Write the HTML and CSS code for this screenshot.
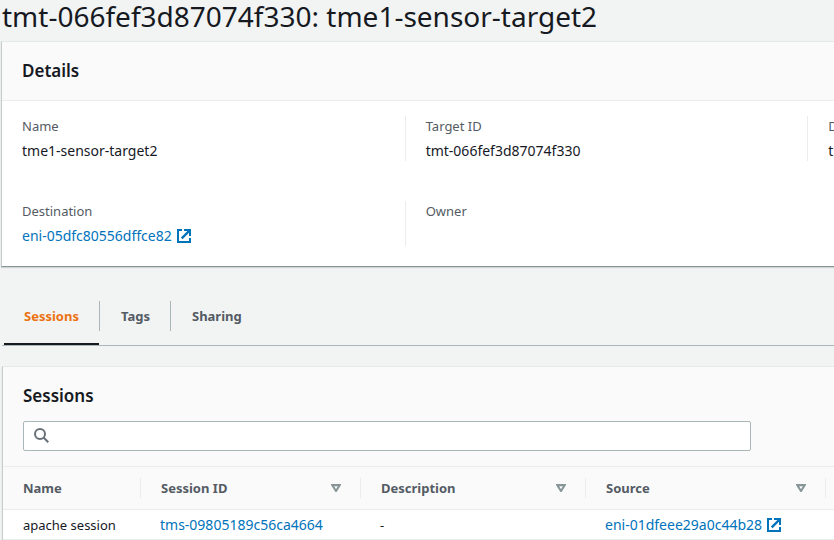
FILE: index.html
```html
<!DOCTYPE html>
<html lang="en">
<head>
    <meta charset="UTF-8">
    <meta name="viewport" content="width=device-width, initial-scale=1.0">
    <title>Traffic mirror target</title>
    <link rel="stylesheet" href="styles.css">
</head>
<body>
    <svg class="sprite" aria-hidden="true">
        <symbol id="external" viewBox="0 0 14 14">
            <path d="M5 1H1v12h12V9" fill="none" stroke="currentColor" stroke-width="2"/>
            <path d="M7 0h7v7h-2V3.8L5.6 10.2 3.9 8.5 10.4 2H7z" fill="currentColor"/>
        </symbol>
        <symbol id="sort" viewBox="0 0 10 8">
            <path d="M0 0h10v1L5.6 8H4.4L0 1zM3.2 2.3L5 5.2 6.8 2.3z" fill="currentColor" fill-rule="evenodd"/>
        </symbol>
    </svg>
    <main class="page">
        <h1>tmt-066fef3d87074f330: tme1-sensor-target2</h1>

        <section class="card">
            <div class="card-header">
                <h2>Details</h2>
            </div>
            <dl class="details">
                <div class="field">
                    <dt>Name</dt>
                    <dd>tme1-sensor-target2</dd>
                </div>
                <div class="field">
                    <dt>Target ID</dt>
                    <dd>tmt-066fef3d87074f330</dd>
                </div>
                <div class="field">
                    <dt>Description</dt>
                    <dd>tme1-sensor-target2</dd>
                </div>
                <div class="field">
                    <dt>Destination</dt>
                    <dd><a href="#">eni-05dfc80556dffce82 <svg class="external"><use href="#external"/></svg></a></dd>
                </div>
                <div class="field">
                    <dt>Owner</dt>
                    <dd></dd>
                </div>
            </dl>
        </section>

        <div class="sessions">
            <nav class="tabs">
                <button class="tab active" type="button">Sessions</button>
                <button class="tab" type="button">Tags</button>
                <button class="tab" type="button">Sharing</button>
            </nav>

            <section class="card">
                <div class="card-header">
                    <h2>Sessions</h2>
                    <div class="search">
                        <svg viewBox="0 0 16 16" aria-hidden="true">
                            <path d="M9.8 9.8L14.3 14.3" fill="none" stroke="currentColor" stroke-width="2"/>
                            <circle cx="6" cy="6" r="5" fill="none" stroke="currentColor" stroke-width="2"/>
                        </svg>
                        <input type="text" aria-label="Filter sessions">
                    </div>
                </div>
                <table>
                    <colgroup>
                        <col class="col-name">
                        <col class="col-id">
                        <col class="col-description">
                        <col class="col-source">
                        <col>
                    </colgroup>
                    <thead>
                        <tr>
                            <th><div class="th">Name</div></th>
                            <th><div class="th">Session ID <svg class="sort"><use href="#sort"/></svg></div></th>
                            <th><div class="th">Description <svg class="sort"><use href="#sort"/></svg></div></th>
                            <th><div class="th">Source <svg class="sort"><use href="#sort"/></svg></div></th>
                            <th></th>
                        </tr>
                    </thead>
                    <tbody>
                        <tr>
                            <td>apache session</td>
                            <td><a href="#">tms-09805189c56ca4664</a></td>
                            <td>-</td>
                            <td><a href="#">eni-01dfeee29a0c44b28 <svg class="external"><use href="#external"/></svg></a></td>
                            <td></td>
                        </tr>
                    </tbody>
                </table>
            </section>
        </div>
    </main>
</body>
</html>
```
FILE: styles.css
```css
* {
    box-sizing: border-box;
}
body {
    margin: 0;
    background: #f2f4f3;
    color: #16191f;
    font-family: "Noto Sans", "Open Sans", sans-serif;
    font-size: 13px;
    line-height: 20px;
    overflow: hidden;
}
h1, h2, dl, dd {
    margin: 0;
}
h1 {
    font-size: 28px;
    line-height: 32px;
    font-weight: 400;
    padding-left: 1px;
    margin-bottom: 9px;
}
h2 {
    font-size: 17px;
    line-height: 20px;
    font-weight: 600;
}
a {
    display: inline-flex;
    align-items: center;
    gap: 5px;
    color: #0073bb;
    font-size: 14px;
    text-decoration: none;
    vertical-align: top;
}
a:hover {
    text-decoration: underline;
}
.sprite {
    display: none;
}
.external {
    width: 14px;
    height: 14px;
}
/* wide console layout, clipped on small windows */
.page {
    min-width: 1210px;
    padding-left: 1px;
}
.card {
    background: #fff;
    border-top: 1px solid #e4e9e9;
    border-left: 1px solid #c5cccd;
    border-bottom: 1px solid #879596;
    box-shadow: 0 1px 1px rgba(0, 28, 36, 0.15);
}
.card-header {
    background: #fafafa;
    border-bottom: 1px solid #eaeded;
    padding: 19px 20px;
}
.details {
    display: grid;
    grid-template-columns: repeat(3, 1fr);
    row-gap: 40px;
    padding: 15px 0 20px;
}
.field {
    min-height: 45px;
    padding: 0 20px;
}
.field:not(:nth-child(3n + 1)) {
    border-left: 1px solid #eaeded;
}
.field dt {
    color: #545b64;
    margin-bottom: 5px;
}
.field dd {
    font-size: 14px;
}
.sessions {
    padding-left: 1px;
    margin-top: 34px;
}
.tabs {
    display: flex;
    padding-left: 2px;
    margin-bottom: 20px;
    border-bottom: 1px solid #aab7b8;
}
.tab {
    position: relative;
    border: none;
    border-bottom: 2px solid transparent;
    background: transparent;
    padding: 5px 20px 17px;
    margin-right: 2px;
    color: #545b64;
    font: inherit;
    font-weight: 700;
    cursor: pointer;
}
.tab:not(:last-child)::after {
    content: "";
    position: absolute;
    top: 0;
    right: -1px;
    height: 30px;
    border-right: 1px solid #aab7b8;
}
.tab.active {
    color: #ec7211;
    border-bottom-color: #16191f;
}
.sessions .card-header {
    padding-bottom: 15px;
}
.search {
    display: flex;
    align-items: center;
    max-width: 728px;
    height: 30px;
    margin-top: 15px;
    padding: 0 10px;
    gap: 10px;
    border: 1px solid #aab7b8;
    border-radius: 2px;
    background: #fff;
    color: #687078;
}
.search svg {
    width: 16px;
    height: 16px;
}
.search input {
    flex: 1;
    border: none;
    outline: none;
    background: transparent;
    font: inherit;
}
table {
    width: 100%;
    table-layout: fixed;
    border-collapse: separate;
    border-spacing: 0;
}
.col-name {
    width: 138px;
}
.col-id {
    width: 220px;
}
.col-description {
    width: 225px;
}
.col-source {
    width: 240px;
}
th {
    padding: 11px 0;
    background: #fafafa;
    border-bottom: 1px solid #eaeded;
    text-align: left;
}
.th {
    display: flex;
    align-items: center;
    justify-content: space-between;
    height: 20px;
    padding: 0 19px 0 20px;
    border-right: 1px solid #eaeded;
    color: #545b64;
}
.sort {
    width: 10px;
    height: 8px;
    color: #879596;
}
td {
    padding: 5px 20px 4px 19px;
    border-bottom: 1px solid #eaeded;
    white-space: nowrap;
}
td:first-child {
    padding-left: 20px;
}
```
